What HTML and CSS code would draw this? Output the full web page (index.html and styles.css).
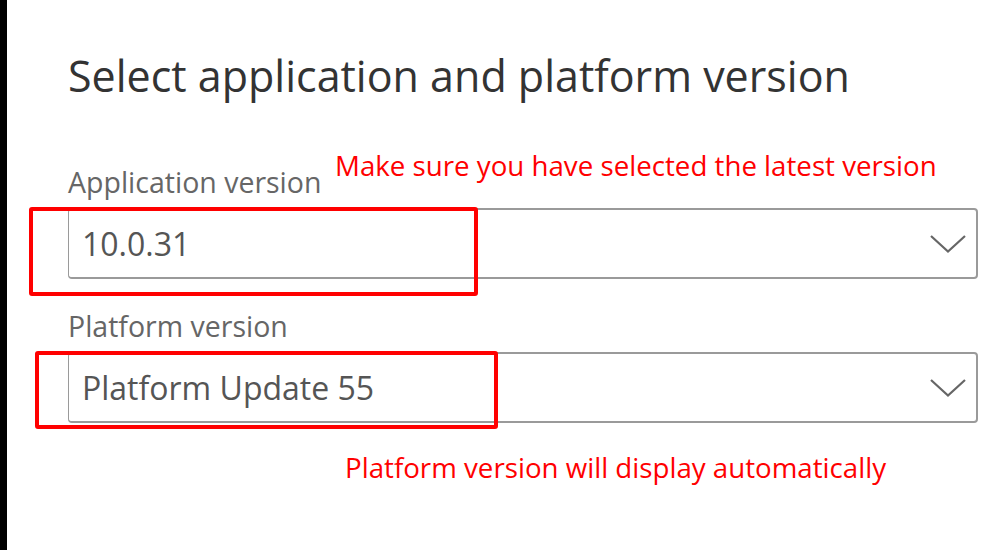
FILE: index.html
```html
<!DOCTYPE html>
<html>
<head>
    <meta charset="utf-8" />
    <title>Select application and platform version</title>
    <link rel="stylesheet" href="styles.css">
</head>
<body>
    <div class="panel">
        <h1 class="title">Select application and platform version</h1>

        <div class="field">
            <label class="field-label">Application version</label>
            <div class="select">
                <span class="select-value">10.0.31</span>
                <svg class="chevron" viewBox="0 0 36 20" width="36" height="20">
                    <path d="M1 2 L18 17.5 L35 2" fill="none" stroke="#666" stroke-width="2.2" />
                </svg>
            </div>
        </div>

        <div class="field">
            <label class="field-label">Platform version</label>
            <div class="select">
                <span class="select-value">Platform Update 55</span>
                <svg class="chevron" viewBox="0 0 36 20" width="36" height="20">
                    <path d="M1 2 L18 17.5 L35 2" fill="none" stroke="#666" stroke-width="2.2" />
                </svg>
            </div>
        </div>

        <!-- annotations drawn over the screenshot -->
        <div class="note note-top">Make sure you have selected the latest version</div>
        <div class="mark mark-app"></div>
        <div class="mark mark-platform"></div>
        <div class="note note-bottom">Platform version will display automatically</div>
    </div>
</body>
</html>
```

FILE: styles.css
```css
html, body {
    margin: 0;
    padding: 0;
    background: #fff;
}
body {
    font-family: "Open Sans", "Noto Sans", sans-serif;
    width: 1000px;
    height: 550px;
    overflow: hidden;
}
.panel {
    position: relative;
    box-sizing: border-box;
    height: 550px;
    border-left: 7px solid #000;
    padding: 0 22px 0 61px;
}
.title {
    margin: 0;
    padding-top: 48px;
    font-size: 43px;
    font-weight: 400;
    line-height: 56px;
    color: #333;
}
.field {
    display: flex;
    flex-direction: column;
}
.field:first-of-type {
    margin-top: 61px;
}
.field + .field {
    margin-top: 30px;
}
.field-label {
    font-size: 28.5px;
    line-height: 34px;
    color: #666;
    margin-bottom: 9px;
}
.select {
    display: flex;
    align-items: center;
    justify-content: space-between;
    box-sizing: border-box;
    height: 71px;
    border: 2px solid #9a9a9a;
    border-left-width: 1px;
    border-radius: 4px;
    padding: 0 10px 0 13px;
}
.select-value {
    font-size: 32px;
    color: #555;
}
.chevron {
    display: block;
}
.note {
    position: absolute;
    color: #f00;
    font-size: 27.7px;
    line-height: 30px;
    white-space: nowrap;
}
.note-top {
    left: 328px;
    top: 150px;
}
.note-bottom {
    left: 338px;
    top: 452px;
}
.mark {
    position: absolute;
    border: 4px solid #f00;
    border-radius: 3px;
    box-sizing: border-box;
}
.mark-app {
    left: 22px;
    top: 207px;
    width: 449px;
    height: 89px;
}
.mark-platform {
    left: 28px;
    top: 351px;
    width: 463px;
    height: 78px;
}
```
